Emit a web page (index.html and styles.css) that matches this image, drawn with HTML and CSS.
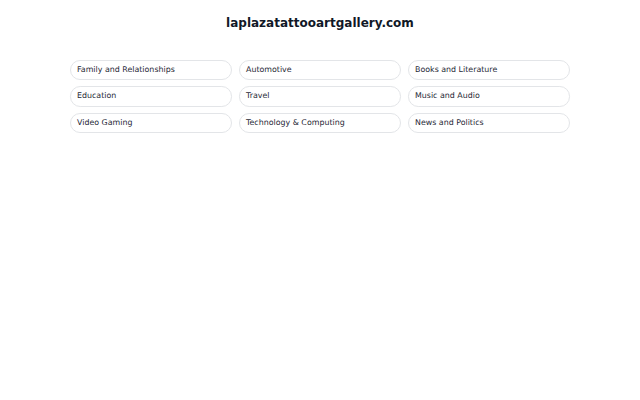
FILE: index.html
```html
<!DOCTYPE html>
<html>
<head>
<meta charset="utf-8">
<link rel="stylesheet" href="styles.css">
</head>
<body>
<div class="page">
  <h1 class="title">laplazatattooartgallery.com</h1>
  <div class="grid">
    <div class="item">Family and Relationships</div>
    <div class="item">Automotive</div>
    <div class="item">Books and Literature</div>
    <div class="item">Education</div>
    <div class="item">Travel</div>
    <div class="item">Music and Audio</div>
    <div class="item">Video Gaming</div>
    <div class="item">Technology &amp; Computing</div>
    <div class="item">News and Politics</div>
  </div>
</div>
</body>
</html>
```
FILE: styles.css
```css
html, body {
  margin: 0;
  padding: 0;
  background: #ffffff;
}
body {
  font-family: "DejaVu Sans", sans-serif;
  color: #1f2328;
}
.page {
  width: 500px;
  margin: 0 auto;
  padding-top: 15px;
}
.title {
  margin: 0;
  text-align: center;
  font-size: 12px;
  font-weight: bold;
  line-height: 16px;
  color: #111827;
}
.grid {
  margin-top: 29px;
  display: grid;
  grid-template-columns: repeat(3, 1fr);
  gap: 6px 7px;
}
.item {
  height: 20.4px;
  box-sizing: border-box;
  border: 1px solid #e3e5e8;
  border-radius: 10.2px;
  padding: 0 6px;
  font-size: 7.9px;
  line-height: 18.4px;
  color: #1f2937;
}
```
